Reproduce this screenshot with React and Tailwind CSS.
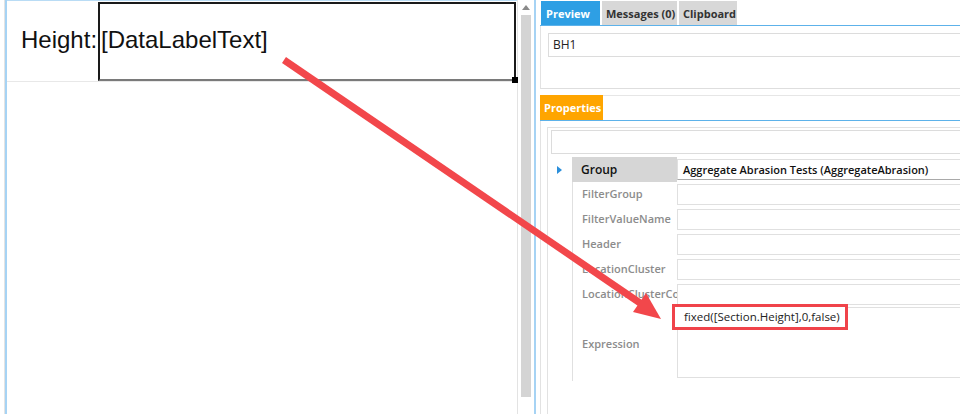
import React from 'react';

const props = [
  { name: 'FilterGroup' },
  { name: 'FilterValueName' },
  { name: 'Header' },
  { name: 'LocationCluster' },
  { name: 'LocationClusterCo' },
];

export default function App() {
  return (
    <div className="relative w-[960px] h-[414px] overflow-hidden bg-white flex font-['Open_Sans',sans-serif]">
      {/* Left designer panel */}
      <div className="w-[540px] h-full flex shrink-0">
        <div className="w-1" />
        <div className="w-px bg-[#e3e3e3]" />
        <div className="w-[2px] bg-[#a6d3f4]" />
        <div className="w-[510px] border-t border-[#b9dcf5]">
          <div className="h-[81px] flex items-start border-b border-[#e8e8e8]">
            <div className="w-[91px] pl-[14px] pt-[23px] text-[24px] leading-[32px] text-[#111] font-['Liberation_Sans',sans-serif] whitespace-nowrap">
              Height:
            </div>
            <div className="relative w-[418px] h-[79px] mt-px border-2 border-[#1a1a1a] border-b-[#7a7a7a] pl-[1px] pt-[20px] text-[24px] leading-[32px] text-[#111] font-['Liberation_Sans',sans-serif]">
              [DataLabelText]
              <div className="absolute -right-[4px] -bottom-[4px] w-[6px] h-[6px] bg-black" />
            </div>
          </div>
        </div>
        <div className="w-px bg-[#e3e3e3]" />
        <div className="w-[15px] flex flex-col items-center pt-[5px]">
          <div className="w-0 h-0 border-l-[4px] border-r-[4px] border-b-[5px] border-l-transparent border-r-transparent border-b-[#8a8a8a]" />
          <div className="mt-[5px] w-[10px] h-[382px] bg-[#d4d4d4]" />
        </div>
        <div className="w-px" />
        <div className="w-[2px] bg-[#a6d3f4]" />
        <div className="w-[4px]" />
      </div>

      {/* Right panel */}
      <div className="flex-1 h-full flex flex-col font-['Open_Sans',sans-serif]">
        <div className="h-[25px] flex items-end gap-[2px] pl-px">
          <div className="w-[59px] h-[24px] bg-[#2e9fe4] text-white text-[11px] font-bold flex items-center pl-[5px] pt-[2px]">Preview</div>
          <div className="w-[75px] h-[24px] bg-[#d8d8d8] text-[#333] text-[11px] font-bold flex items-center pl-[4px] pt-[2px]">Messages (0)</div>
          <div className="w-[58px] h-[24px] bg-[#d8d8d8] text-[#333] text-[11px] font-bold flex items-center pl-[4px] pt-[2px]">Clipboard</div>
        </div>
        <div className="h-px bg-[#5db2ea]" />
        <div className="h-[63px] border-l border-[#e2e2e2] pl-[7px] pt-[7px] border-b border-b-[#dedede]">
          <div className="h-[24px] border border-[#dcdcdc] border-r-0 pl-[4px] text-[12px] leading-[22px] text-[#222]">BH1</div>
        </div>
        <div className="h-[31px] flex items-end pt-[6px]">
          <div className="w-[63px] h-[25px] bg-[#ffa500] text-white text-[11px] font-bold flex items-center pl-[4px] pt-[1px] shrink-0">Properties</div>
          <div className="flex-1 h-[25px] border-t border-[#e6e6e6]" />
        </div>
        <div className="h-px bg-[#5db2ea]" />
        <div className="flex-1 border-l border-[#e2e2e2] pl-[6px] pt-[6px]">
          <div className="h-full border-l border-t border-[#e2e2e2] pl-[3px] pt-[2px]">
            <div className="h-[24px] border border-[#dcdcdc] border-r-0" />
            <div className="mt-[3px] flex flex-col text-[11px]">
              {/* Group row */}
              <div className="h-[25px] flex">
                <div className="w-[21px] flex items-center pl-[6px]">
                  <div className="w-0 h-0 border-t-[4px] border-b-[4px] border-l-[5px] border-t-transparent border-b-transparent border-l-[#2b8fdb]" />
                </div>
                <div className="w-[105px] bg-[#d6d6d6] font-semibold text-[#111] flex items-center pl-[9px] text-[12px]">Group</div>
                <div className="flex-1 pt-[2px] pb-[2px]">
                  <div className="h-full border-t border-l border-[#e0e0e0] border-b border-b-[#a9a9a9] pl-[5px] font-semibold text-[#111] leading-[19px] whitespace-nowrap">
                    Aggregate Abrasion Tests (AggregateAbrasion)
                  </div>
                </div>
              </div>
              {props.map((p) => (
                <div key={p.name} className="h-[25px] flex">
                  <div className="w-[21px]" />
                  <div className="w-[105px] border-l border-[#e0e0e0] font-semibold text-[#8c8c8c] flex items-center pl-[9px] whitespace-nowrap overflow-hidden">{p.name}</div>
                  <div className="flex-1 py-[2px]">
                    <div className="h-full border border-r-0 border-[#e0e0e0]" />
                  </div>
                </div>
              ))}
              {/* Expression row */}
              <div className="h-[74px] flex">
                <div className="w-[21px]" />
                <div className="w-[105px] border-l border-[#e0e0e0] font-semibold text-[#8c8c8c] flex items-center pl-[9px]">Expression</div>
                <div className="flex-1 pb-[3px]">
                  <div className="h-full border border-r-0 border-[#e0e0e0]">
                    <span className="relative -left-[6px] -top-[4px] inline-block border-[3px] border-[#f0434a] bg-white pl-[9px] pr-[5px] leading-[20px] text-[11.5px] text-[#222] whitespace-nowrap">
                      fixed([Section.Height],0,false)
                    </span>
                  </div>
                </div>
              </div>
            </div>
          </div>
        </div>
      </div>

      {/* Annotation arrow */}
      <svg className="absolute left-0 top-0 pointer-events-none" width="960" height="414">
        <line x1="284" y1="60" x2="643" y2="305" stroke="#f2474b" strokeWidth="7" />
        <polygon points="661,319 633,312 646,293" fill="#f2474b" />
      </svg>
    </div>
  );
}
